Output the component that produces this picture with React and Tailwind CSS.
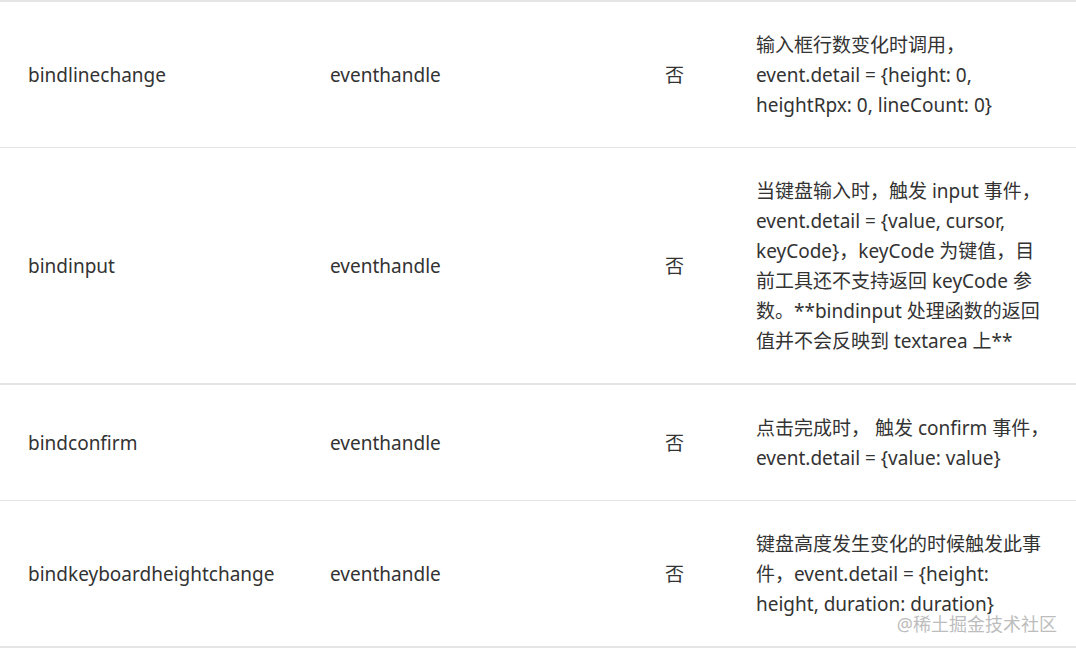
import React from 'react';

const rows = [
  {
    name: 'bindlinechange',
    type: 'eventhandle',
    required: '否',
    desc: '输入框行数变化时调用，event.detail = {height: 0, heightRpx: 0, lineCount: 0}',
    border: 'border-b',
    pad: 'pr-[27px]',
  },
  {
    name: 'bindinput',
    type: 'eventhandle',
    required: '否',
    desc: '当键盘输入时，触发 input 事件，event.detail = {value, cursor, keyCode}，keyCode 为键值，目前工具还不支持返回 keyCode 参数。**bindinput 处理函数的返回值并不会反映到 textarea 上**',
    border: 'border-b-2',
    pad: 'pr-[27px]',
  },
  {
    name: 'bindconfirm',
    type: 'eventhandle',
    required: '否',
    desc: '点击完成时， 触发 confirm 事件，event.detail = {value: value}',
    border: 'border-b',
    pad: 'pr-[20px]',
  },
  {
    name: 'bindkeyboardheightchange',
    type: 'eventhandle',
    required: '否',
    desc: '键盘高度发生变化的时候触发此事件，event.detail = {height: height, duration: duration}',
    border: 'border-b-2',
    pad: 'pr-[27px]',
  },
];

const App = () => {
  return (
    <div
      className="relative w-[1076px] h-[651px] bg-white text-[#333] text-[19px] leading-[30px] overflow-hidden"
      style={{ fontFamily: '"Noto Sans", "Noto Sans CJK SC", sans-serif' }}
    >
      <div className="border-t-2 border-[#e5e5e5]">
        {rows.map((row) => (
          <div
            key={row.name}
            className={`grid grid-cols-[302px_335px_91px_1fr] items-center border-[#e5e5e5] ${row.border}`}
          >
            <div className="pl-[28px]">{row.name}</div>
            <div className="pl-[28px]">{row.type}</div>
            <div className="pl-[28px]">{row.required}</div>
            <div className={`pl-[28px] pt-[28px] pb-[27px] break-words ${row.pad}`}>{row.desc}</div>
          </div>
        ))}
      </div>

      {/* watermark */}
      <div
        className="absolute right-[19px] bottom-[16px] text-[18px] leading-[22px] text-[#bdbdbd]"
        style={{ textShadow: '0 0 2px #fff' }}
      >
        @稀土掘金技术社区
      </div>
    </div>
  );
};

export default App;
